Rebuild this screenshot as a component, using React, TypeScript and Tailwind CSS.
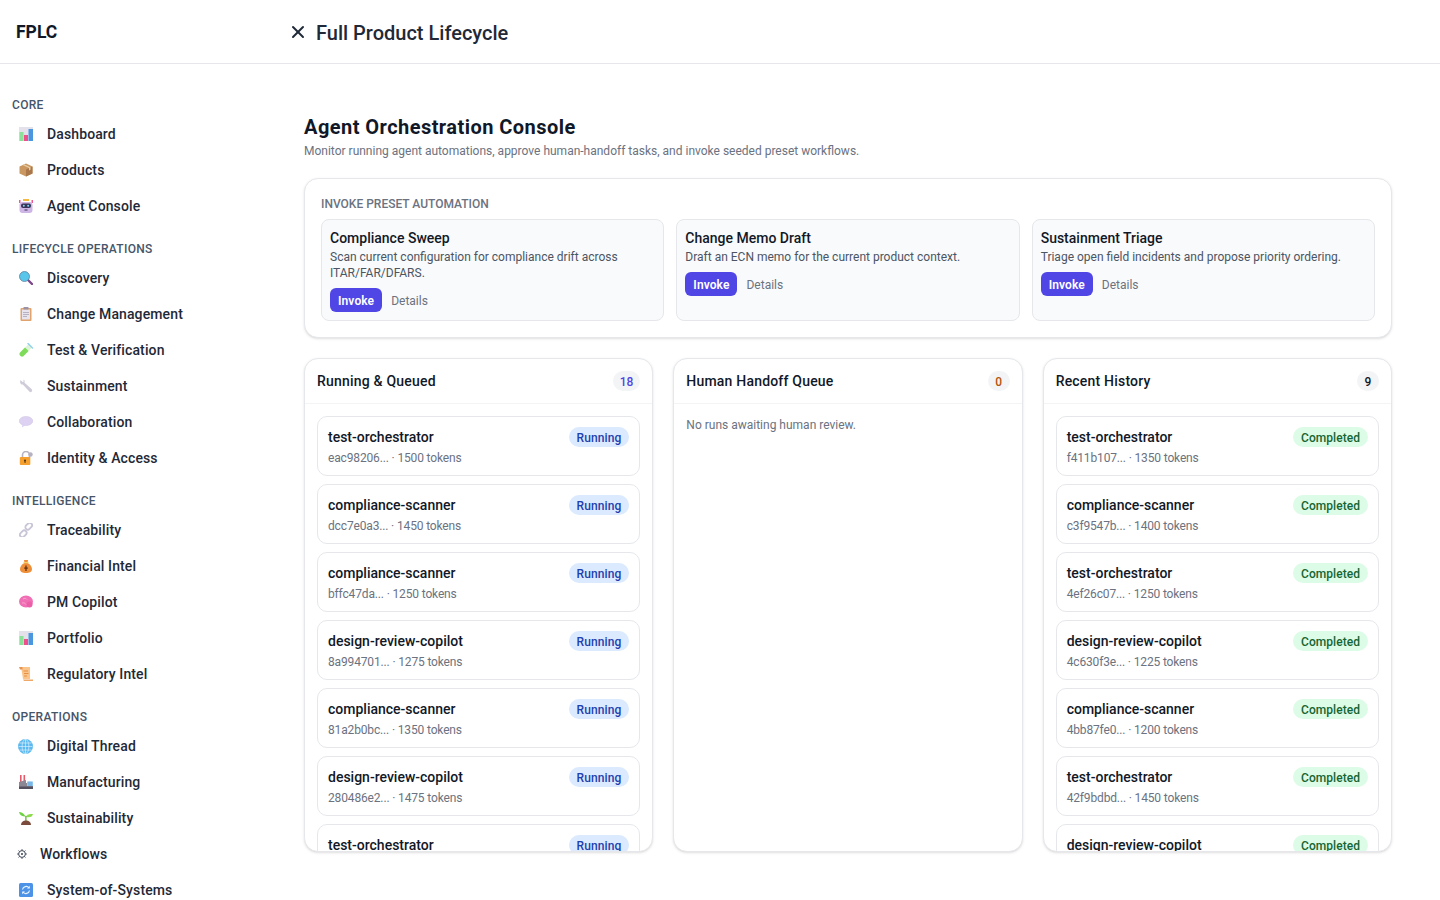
import type { ReactNode } from "react"
import { X } from "lucide-react"

const Icon = ({ children }: { children: ReactNode }) => (
  <svg viewBox="0 0 14 14" className="w-[14px] h-[14px] shrink-0">
    {children}
  </svg>
)

const ChartIcon = () => (
  <Icon>
    <rect x="0" y="0" width="14" height="14" fill="#e4e1ea" />
    <rect x="0.5" y="5" width="4" height="9" fill="#8be09a" />
    <rect x="5" y="8" width="4" height="6" fill="#ec4f8c" />
    <rect x="9.5" y="2" width="4.5" height="12" fill="#4a97e0" />
  </Icon>
)

const PackageIcon = () => (
  <Icon>
    <path d="M7 0.5 13.5 3.5V10.5L7 13.5 0.5 10.5V3.5Z" fill="#c9975f" />
    <path d="M7 6.5 13.5 3.5V10.5L7 13.5Z" fill="#a9774a" />
    <path d="M3.5 2 10 5V7.5L11.5 6.8V4.3L5 1.2Z" fill="#e8cda6" />
  </Icon>
)

const RobotIcon = () => (
  <Icon>
    <rect x="4" y="0" width="6" height="2" fill="#f4b942" />
    <rect x="0" y="1" width="1.5" height="3" fill="#ef5a8d" />
    <rect x="12.5" y="1" width="1.5" height="3" fill="#ef5a8d" />
    <rect x="0.5" y="3" width="13" height="11" rx="3" fill="#cdb5e6" />
    <rect x="2" y="4.5" width="10" height="4.5" rx="2" fill="#3a3355" />
    <circle cx="4.8" cy="6.8" r="1" fill="#7fd4f5" />
    <circle cx="9.2" cy="6.8" r="1" fill="#7fd4f5" />
    <rect x="5.5" y="10.5" width="3" height="1" fill="#3a3355" />
  </Icon>
)

const SearchIcon = () => (
  <Icon>
    <path d="M8.5 8.5 13 13" stroke="#7d4a8c" strokeWidth="2.4" strokeLinecap="round" />
    <circle cx="5.5" cy="5.5" r="5" fill="#57c6ea" stroke="#5a7f9c" strokeWidth="0.8" />
  </Icon>
)

const ClipboardIcon = () => (
  <Icon>
    <rect x="1.5" y="1" width="11" height="13" rx="1" fill="#e0a36c" />
    <rect x="3" y="2.5" width="8" height="10" fill="#e8e4ee" />
    <rect x="4.5" y="0" width="5" height="2.5" rx="0.6" fill="#9a93a8" />
    <path d="M4 5.5h6M4 7.5h6M4 9.5h4" stroke="#a9a3b5" strokeWidth="0.8" />
  </Icon>
)

const TubeIcon = () => (
  <Icon>
    <path d="M9.5 1 13 4.500 4.800 12.700A2.400 2.400 0 0 1 1.300 9.200Z" fill="#dff4d8" />
    <path d="M6 4.500 9.500 8 4.800 12.700A2.400 2.400 0 0 1 1.300 9.200Z" fill="#7fdc5a" />
    <path d="M9 0.500 13.500 5" stroke="#8fd0f0" strokeWidth="1.400" strokeLinecap="round" />
  </Icon>
)

const WrenchIcon = () => (
  <Icon>
    <path
      d="M1.5 1 3.5 3 4.8 2.6 4.3 0.8C5.5 0.5 6 2 5.5 3.8L12.5 10C13.5 11 13.2 12 12.8 12.6 12 13.4 11 13.3 10.3 12.6L3.8 5.5C2 6 0.4 4 1.5 1Z"
      fill="#cfcbd8"
    />
  </Icon>
)

const BubbleIcon = () => (
  <Icon>
    <ellipse cx="7" cy="6" rx="6.8" ry="4.6" fill="#ddd2f2" stroke="#c4b8de" strokeWidth="0.4" />
    <path d="M3.5 9 2.8 12.5 6.5 10.2Z" fill="#ddd2f2" />
  </Icon>
)

const LockIcon = () => (
  <Icon>
    <path d="M3.5 7V4a3.5 3.5 0 0 1 7 0v3" fill="none" stroke="#b7b2c2" strokeWidth="1.6" />
    <circle cx="11.5" cy="3.5" r="2.2" fill="#b7b2c2" />
    <rect x="0.8" y="6" width="10.5" height="8" rx="1" fill="#f59f2f" />
    <circle cx="6" cy="9.5" r="1.1" fill="#5b3a1a" />
    <rect x="5.5" y="9.8" width="1" height="2.2" fill="#5b3a1a" />
  </Icon>
)

const LinkIcon = () => (
  <Icon>
    <g fill="none" stroke="#c9c4d6" strokeWidth="1.8">
      <rect x="6" y="0.8" width="7.5" height="4.8" rx="2.4" transform="rotate(-45 9.75 3.2)" />
      <rect x="0.5" y="8.4" width="7.5" height="4.8" rx="2.4" transform="rotate(-45 4.25 10.8)" />
    </g>
  </Icon>
)

const MoneyIcon = () => (
  <Icon>
    <path d="M5 1h4L8.5 4C11 5 13 7.500 13 10c0 3-2.500 4-6 4s-6-1-6-4c0-2.500 2-5 4.500-6Z" fill="#ee8f3a" />
    <rect x="4.5" y="3" width="5" height="1.2" fill="#f6d365" />
    <rect x="6.4" y="6.5" width="1.2" height="5.5" fill="#5b2f12" />
    <rect x="5.2" y="8.5" width="3.6" height="1.2" fill="#5b2f12" />
  </Icon>
)

const BrainIcon = () => (
  <Icon>
    <ellipse cx="7" cy="6.5" rx="7" ry="6" fill="#f06fb4" />
    <circle cx="10.5" cy="9.5" r="3" fill="#ea5fa8" />
    <path d="M4 4c1.5-1 3-1 4 .5M3 8c2-.5 3 0 4 1.5" fill="none" stroke="#f9a8d4" strokeWidth="0.9" />
  </Icon>
)

const ScrollIcon = () => (
  <Icon>
    <path d="M2 0h9v12H4Z" fill="#fbc48a" />
    <path d="M0 0h3.5v2.5H1Z" fill="#e9934f" />
    <path d="M4 12.5H14V14H5Z" fill="#f0a866" />
    <path d="M4.5 4h4.5M5 6.5h4.5M5 9h3" stroke="#e08a3e" strokeWidth="0.9" />
  </Icon>
)

const GlobeIcon = () => (
  <svg viewBox="0 0 15 15" className="w-[15px] h-[15px] shrink-0 -ml-[1px]">
    <circle cx="7.5" cy="7.5" r="7.5" fill="#5bb8f0" />
    <g fill="none" stroke="#d5effc" strokeWidth="0.7">
      <ellipse cx="7.5" cy="7.5" rx="3.4" ry="7.2" />
      <path d="M7.5 0v15M0.5 7.5h14M1.5 4h12M1.5 11h12" />
    </g>
  </svg>
)

const FactoryIcon = () => (
  <Icon>
    <rect x="1" y="0" width="1.6" height="7" fill="#e35a6a" />
    <rect x="4.5" y="0" width="1.6" height="7" fill="#e35a6a" />
    <path d="M0 7 7 5V8H14V14H0Z" fill="#8b8795" />
    <rect x="8" y="6.5" width="6" height="4.5" fill="#8fc7ee" />
    <rect x="0" y="11.5" width="14" height="2.5" fill="#55505f" />
    <path d="M10 6.5v4.5M12 6.5v4.5" stroke="#4a90d0" strokeWidth="0.6" />
  </Icon>
)

const SproutIcon = () => (
  <Icon>
    <path d="M6.5 5.5C4.5 2 2.5 1 0 1c.5 3 3 4.5 6.5 4.5Z" fill="#6bd33f" />
    <path d="M7 6c.5-2.500 3-3.500 7-3-.5 2.500-3 4-7 3Z" fill="#8cdc4a" />
    <rect x="6.3" y="5" width="1.2" height="5.5" fill="#58a832" />
    <path d="M2 14c0-3 2-4.500 5-4.500s5 1.500 5 4.500Z" fill="#7a4b3a" />
  </Icon>
)

const GearIcon = () => (
  <svg viewBox="0 0 10 10" className="w-[10px] h-[10px] shrink-0">
    <circle cx="5" cy="5" r="3.4" fill="none" stroke="#374151" strokeWidth="1" />
    <circle cx="5" cy="5" r="1" fill="#374151" />
    <path
      d="M5 0v1.2M5 8.800V10M0 5h1.2M8.800 5H10M1.500 1.500l.8.8M7.700 7.700l.8.8M1.500 8.500l.8-.8M7.700 2.300l.8-.8"
      stroke="#374151"
      strokeWidth="0.8"
    />
  </svg>
)

const CycleIcon = () => (
  <Icon>
    <rect width="14" height="14" rx="1.5" fill="#4c93e8" />
    <path d="M3.5 6.5A3.6 3.6 0 0 1 10 5" fill="none" stroke="#e8f2fd" strokeWidth="1.2" />
    <path d="M10.5 7.5A3.6 3.6 0 0 1 4 9" fill="none" stroke="#e8f2fd" strokeWidth="1.2" />
    <path d="M10.800 2.800V5.600H8ZM3.200 11.200V8.400H6Z" fill="#e8f2fd" />
  </Icon>
)

const navGroups: { label: string; items: { name: string; icon: ReactNode; plain?: boolean }[] }[] = [
  {
    label: "CORE",
    items: [
      { name: "Dashboard", icon: <ChartIcon /> },
      { name: "Products", icon: <PackageIcon /> },
      { name: "Agent Console", icon: <RobotIcon /> }
    ]
  },
  {
    label: "LIFECYCLE OPERATIONS",
    items: [
      { name: "Discovery", icon: <SearchIcon /> },
      { name: "Change Management", icon: <ClipboardIcon /> },
      { name: "Test & Verification", icon: <TubeIcon /> },
      { name: "Sustainment", icon: <WrenchIcon /> },
      { name: "Collaboration", icon: <BubbleIcon /> },
      { name: "Identity & Access", icon: <LockIcon /> }
    ]
  },
  {
    label: "INTELLIGENCE",
    items: [
      { name: "Traceability", icon: <LinkIcon /> },
      { name: "Financial Intel", icon: <MoneyIcon /> },
      { name: "PM Copilot", icon: <BrainIcon /> },
      { name: "Portfolio", icon: <ChartIcon /> },
      { name: "Regulatory Intel", icon: <ScrollIcon /> }
    ]
  },
  {
    label: "OPERATIONS",
    items: [
      { name: "Digital Thread", icon: <GlobeIcon /> },
      { name: "Manufacturing", icon: <FactoryIcon /> },
      { name: "Sustainability", icon: <SproutIcon /> },
      { name: "Workflows", icon: <GearIcon />, plain: true },
      { name: "System-of-Systems", icon: <CycleIcon /> }
    ]
  }
]

const presets = [
  {
    title: "Compliance Sweep",
    text: "Scan current configuration for compliance drift across ITAR/FAR/DFARS."
  },
  {
    title: "Change Memo Draft",
    text: "Draft an ECN memo for the current product context."
  },
  {
    title: "Sustainment Triage",
    text: "Triage open field incidents and propose priority ordering."
  }
]

const runningRuns = [
  ["test-orchestrator", "eac98206...", "1500"],
  ["compliance-scanner", "dcc7e0a3...", "1450"],
  ["compliance-scanner", "bffc47da...", "1250"],
  ["design-review-copilot", "8a994701...", "1275"],
  ["compliance-scanner", "81a2b0bc...", "1350"],
  ["design-review-copilot", "280486e2...", "1475"],
  ["test-orchestrator", "7c1e20ab...", "1300"]
]

const historyRuns = [
  ["test-orchestrator", "f411b107...", "1350"],
  ["compliance-scanner", "c3f9547b...", "1400"],
  ["test-orchestrator", "4ef26c07...", "1250"],
  ["design-review-copilot", "4c630f3e...", "1225"],
  ["compliance-scanner", "4bb87fe0...", "1200"],
  ["test-orchestrator", "42f9bdbd...", "1450"],
  ["design-review-copilot", "91d0c3aa...", "1300"]
]

const RunCard = ({ run, completed }: { run: string[]; completed?: boolean }) => (
  <div className="shrink-0 h-[60px] rounded-[10px] border border-[#e5e7eb] bg-white px-2.5 pt-2.5">
    <div className="flex items-center justify-between h-5">
      <span className="text-sm font-medium text-[#111827]">{run[0]}</span>
      {completed ? (
        <span className="flex items-center h-5 px-2 pt-[2px] rounded-full bg-[#dcfce7] text-xs font-medium tracking-[0.05px] text-[#166534]">
          Completed
        </span>
      ) : (
        <span className="flex items-center h-5 px-2 pt-[2px] rounded-full bg-[#dbeafe] text-xs font-medium tracking-[0.1px] text-[#1e40af]">
          Running
        </span>
      )}
    </div>
    <p className="mt-[3px] text-xs leading-4 tracking-[-0.15px] text-[#6b7280]">
      {run[1]} · {run[2]} tokens
    </p>
  </div>
)

const Column = ({
  title,
  count,
  countColor,
  children
}: {
  title: string
  count: string
  countColor: string
  children: ReactNode
}) => (
  <section className="flex flex-col h-[494px] rounded-[14px] border border-[#e5e7eb] bg-white shadow-sm overflow-hidden">
    <div className="flex items-center justify-between shrink-0 h-[45px] px-3 border-b border-[#f3f4f6]">
      <h3 className="text-sm font-medium tracking-[0.2px] text-[#111827]">{title}</h3>
      <span className={`flex items-center justify-center h-5 min-w-[22px] px-[7px] pt-[2px] rounded-full bg-[#f3f4f6] text-xs font-medium ${countColor}`}>
        {count}
      </span>
    </div>
    {children}
  </section>
)

export default function App() {
  return (
    <div className="h-screen overflow-hidden bg-white font-['Roboto',sans-serif] text-[#111827]">
      <header className="flex items-center h-16 border-b border-[#e5e7eb]">
        <div className="w-[290px] pl-4 pt-[2px] text-[17.5px] font-bold text-[#111827]">FPLC</div>
        <X className="w-5 h-5 -ml-[2px] text-[#1f2937]" strokeWidth={2.4} />
        <h1 className="ml-2 pt-[2px] text-xl font-medium text-[#1f2937]">Full Product Lifecycle</h1>
      </header>

      <div className="flex">
        <aside className="w-[280px] shrink-0 pl-3 pt-[33px]">
          {navGroups.map((group) => (
            <div key={group.label} className="mb-[17px]">
              <p className="h-4 leading-4 text-xs font-medium tracking-[0.3px] text-[#475569]">{group.label}</p>
              <ul className="mt-[3px]">
                {group.items.map((item) => (
                  <li
                    key={item.name}
                    className={`flex items-center h-9 text-sm font-medium tracking-[0.12px] text-[#1f2937] ${
                      item.plain ? "pl-[5px] gap-[13px]" : "pl-[7px] gap-[14px]"
                    }`}
                  >
                    {item.icon}
                    <span>{item.name}</span>
                  </li>
                ))}
              </ul>
            </div>
          ))}
        </aside>

        <main className="flex-1 pl-6 pr-12 pt-[49px]">
          <h2 className="text-xl leading-7 font-bold tracking-[0.45px] text-[#111827]">Agent Orchestration Console</h2>
          <p className="mt-[2px] text-xs leading-4 text-[#6b7280]">
            Monitor running agent automations, approve human-handoff tasks, and invoke seeded preset workflows.
          </p>

          <section className="mt-[19px] h-[160px] rounded-[14px] border border-[#e5e7eb] bg-white shadow-sm px-4 pt-[17px]">
            <p className="text-xs leading-4 font-medium text-[#6b7280]">INVOKE PRESET AUTOMATION</p>
            <div className="grid grid-cols-3 gap-3 mt-[7px]">
              {presets.map((preset) => (
                <div key={preset.title} className="h-[102px] rounded-lg border border-[#e5e7eb] bg-[#f9fafb] p-2">
                  <p className="text-sm leading-5 font-medium text-[#111827]">{preset.title}</p>
                  <p className="mt-px text-xs leading-4 text-[#4b5563]">{preset.text}</p>
                  <div className="flex items-center gap-[9px] mt-[7px]">
                    <button
                      type="button"
                      className="h-6 px-2 pt-[2px] rounded-md bg-[#4f46e5] text-xs font-semibold tracking-[0.1px] text-white"
                    >
                      Invoke
                    </button>
                    <span className="pt-[2px] text-xs text-[#6b7280]">Details</span>
                  </div>
                </div>
              ))}
            </div>
          </section>

          <div className="grid grid-cols-3 gap-5 mt-5">
            <Column title="Running & Queued" count="18" countColor="text-[#4f46e5]">
              <div className="flex flex-col gap-2 p-3 min-h-0 overflow-hidden">
                {runningRuns.map((run) => (
                  <RunCard key={run[1]} run={run} />
                ))}
              </div>
            </Column>
            <Column title="Human Handoff Queue" count="0" countColor="text-[#b45309]">
              <p className="p-3 pt-[13px] text-xs leading-4 text-[#6b7280]">No runs awaiting human review.</p>
            </Column>
            <Column title="Recent History" count="9" countColor="text-[#111827]">
              <div className="flex flex-col gap-2 p-3 min-h-0 overflow-hidden">
                {historyRuns.map((run) => (
                  <RunCard key={run[1]} run={run} completed />
                ))}
              </div>
            </Column>
          </div>
        </main>
      </div>
    </div>
  )
}
